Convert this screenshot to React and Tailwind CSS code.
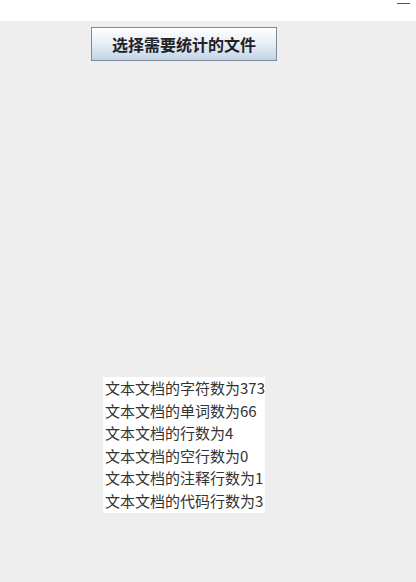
export default function App() {
  const lines = [
    '文本文档的字符数为373',
    '文本文档的单词数为66',
    '文本文档的行数为4',
    '文本文档的空行数为0',
    '文本文档的注释行数为1',
    '文本文档的代码行数为3',
  ];

  return (
    <div className="w-[416px] h-[582px] flex flex-col bg-[#eeeeee]" style={{ fontFamily: '"Noto Sans CJK SC", "Liberation Sans", sans-serif' }}>
      {/* title strip */}
      <div className="h-[21px] bg-white flex justify-end items-start pr-[6px] pt-[3px]">
        <div className="w-[13px] h-px bg-[#555]" />
      </div>

      <div className="flex flex-col flex-1">
        <div className="pt-[6px] pl-[91px]">
          <button className="w-[186px] h-[34px] border border-[#7a8a99] bg-gradient-to-b from-white via-[#e6eef6] to-[#c3d4e6] flex items-center justify-center text-[16px] font-bold text-[#222]">
            选择需要统计的文件
          </button>
        </div>

        <div className="pt-[316px] pl-[103px]">
          <div className="w-[162px] bg-white pl-[2px] text-[15px] leading-[22.6px] text-[#333]">
            {lines.map(l => (
              <div key={l} className="whitespace-nowrap">{l}</div>
            ))}
          </div>
        </div>
      </div>
    </div>
  );
}
